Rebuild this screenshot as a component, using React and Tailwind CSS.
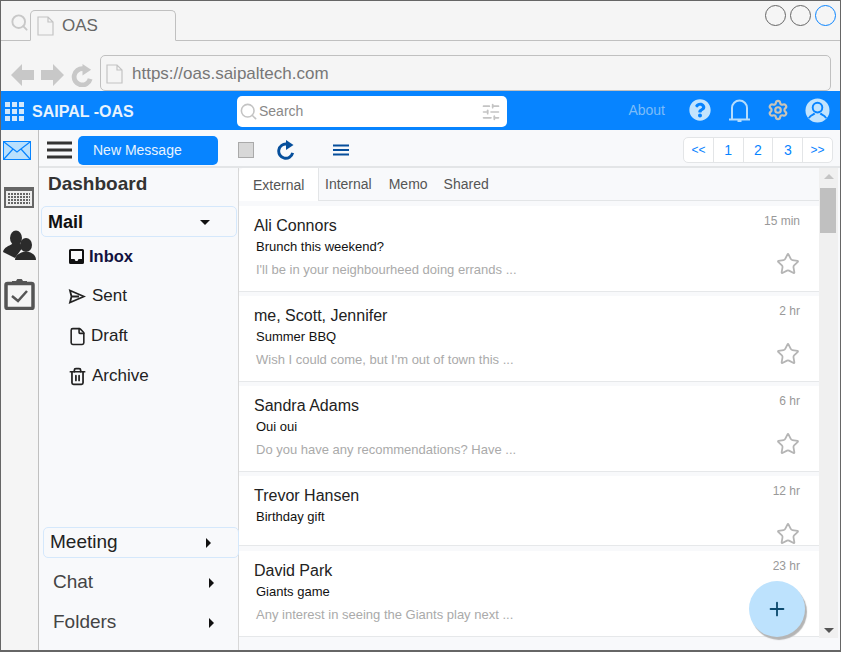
import { Search, SlidersHorizontal, Settings, Star, Plus, File, Trash2 } from "lucide-react";
import { FaQuestionCircle } from "react-icons/fa";

const messages = [
  { name: "Ali Connors", subject: "Brunch this weekend?", preview: "I'll be in your neighbourheed doing errands ...", time: "15 min", height: "h-[86px]" },
  { name: "me, Scott, Jennifer", subject: "Summer BBQ", preview: "Wish I could come, but I'm out of town this ...", time: "2 hr", height: "h-[86px]" },
  { name: "Sandra Adams", subject: "Oui oui", preview: "Do you have any recommendations? Have ...", time: "6 hr", height: "h-[86px]" },
  { name: "Trevor Hansen", subject: "Birthday gift", preview: "", time: "12 hr", height: "h-[70px]" },
  { name: "David Park", subject: "Giants game", preview: "Any interest in seeing the Giants play next ...", time: "23 hr", height: "h-[86px] mt-[1px]", noStar: true },
];

const mailFolders = [
  { label: "Sent", icon: <SentIcon />, gap: "gap-[6px]" },
  { label: "Draft", icon: <File className="w-[19px] h-[19px]" strokeWidth={2} />, gap: "gap-[4px]" },
  { label: "Archive", icon: <Trash2 className="w-[19px] h-[19px]" strokeWidth={2.2} />, gap: "gap-[5px]" },
];

function SentIcon() {
  return (
    <svg width="18" height="17" viewBox="0 0 18 17" fill="none" stroke="currentColor" strokeWidth="1.8">
      <path d="M2 2.500 16 8.500 2 14.500 3.500 8.500ZM3.500 8.500H11" />
    </svg>
  );
}

function InboxIcon() {
  return (
    <svg width="17" height="17" viewBox="0 0 17 17">
      <path fillRule="evenodd" fill="#111" d="M2.500 1h12A1.500 1.500 0 0 1 16 2.500v12a1.500 1.500 0 0 1-1.500 1.500h-12A1.500 1.500 0 0 1 1 14.500v-12A1.500 1.500 0 0 1 2.500 1ZM3 3v8h3.500l1 2h2l1-2H14V3Z" />
    </svg>
  );
}

function RefreshIcon({ size, color, strokeWidth }) {
  return (
    <svg width={size} height={size} viewBox="0 0 24 24" fill="none">
      <path d="M20 15.500A8.500 8.500 0 1 1 13 5" stroke={color} strokeWidth={strokeWidth} />
      <path d="M12 0 21 6 12 12Z" fill={color} />
    </svg>
  );
}

function BrowserArrow({ flip }) {
  return (
    <svg width="23" height="24" viewBox="0 0 23 24" className={flip ? "-scale-x-100" : ""}>
      <path fill="#c8c8c8" d="M0 12 11 1v6h12v10H11v6Z" />
    </svg>
  );
}

function Caret({ down }) {
  return down ? (
    <span className="w-0 h-0 border-x-[5px] border-x-transparent border-t-[5px] border-t-[#111]" />
  ) : (
    <span className="w-0 h-0 border-y-[5px] border-y-transparent border-l-[5px] border-l-[#111]" />
  );
}

function PageIcon() {
  return (
    <svg width="17" height="20" viewBox="0 0 17 20" fill="#f5f5f5" stroke="#c4c4c4" strokeWidth="1.2">
      <path d="M1 1h10l5 5v13H1ZM11 1v5h5" />
    </svg>
  );
}

function GridLogo() {
  return (
    <div className="grid grid-cols-3 gap-[2px] w-[19px]">
      {Array.from({ length: 9 }).map((_, i) => (
        <span key={i} className="w-[5px] h-[5px] bg-[#d3e8fb]" />
      ))}
    </div>
  );
}

function MailCard({ msg }) {
  return (
    <div className={`${msg.height} bg-white border-b border-[#e6e8ea] relative shrink-0 pl-[15px] pr-[19px]`}>
      <div className="flex justify-between">
        <span className="mt-[11px] text-[16px] leading-[18px] text-[#222]">{msg.name}</span>
        <span className="mt-[8px] text-[12px] leading-[14px] text-[#999]">{msg.time}</span>
      </div>
      <p className="ml-[2px] mt-[4px] text-[13px] leading-[16px] text-[#111]">{msg.subject}</p>
      {msg.preview && <p className="ml-[2px] mt-[7px] text-[13px] leading-[16px] text-[#aaa]">{msg.preview}</p>}
      {!msg.noStar && (
        <Star className="absolute right-[19px] top-[46px] w-[24px] h-[24px] text-[#b5b5b5]" strokeWidth={1.8} />
      )}
    </div>
  );
}

export default function App() {
  return (
    <div className="w-[841px] h-[652px] border border-b-2 border-[#666] bg-[#f5f5f5] flex flex-col overflow-hidden font-['Liberation_Sans',Arial,sans-serif]">
      {/* Browser chrome */}
      <div className="h-[40px] border-b border-[#c0c0c0] flex items-end pl-[9px] relative shrink-0">
        <Search className="absolute left-[9px] top-[12px] w-[19px] h-[19px] text-[#c8c8c8]" strokeWidth={2.4} />
        <div className="ml-[20px] w-[146px] h-[31px] -mb-px bg-[#f5f5f5] border border-[#c0c0c0] border-b-[#f5f5f5] rounded-t-[5px] flex items-center pl-[6px] gap-[8px]">
          <PageIcon />
          <span className="text-[17px] text-[#666]">OAS</span>
        </div>
        <div className="ml-auto self-start mt-[4px] mr-[4px] flex gap-[4px]">
          <span className="w-[21px] h-[21px] rounded-full border border-[#666]" />
          <span className="w-[21px] h-[21px] rounded-full border border-[#666]" />
          <span className="w-[21px] h-[21px] rounded-full border border-[#0a84ff]" />
        </div>
      </div>
      <div className="h-[50px] flex items-end pl-[10px] pr-[9px] shrink-0">
        <div className="flex items-center gap-[7px] mb-[4px] mr-[6px]">
          <BrowserArrow />
          <BrowserArrow flip />
          <RefreshIcon size={23} color="#c8c8c8" strokeWidth={5} />
        </div>
        <div className="flex-1 h-[36px] pt-[1px] bg-[#f5f5f5] border border-[#c0c0c0] rounded-[5px] flex items-center pl-[5px] gap-[9px]">
          <PageIcon />
          <span className="text-[17px] text-[#777]">https://oas.saipaltech.com</span>
        </div>
      </div>

      {/* App header */}
      <header className="h-[39px] bg-[#0784ff] flex items-center pl-[4px] pr-[10px] pt-[2px] shrink-0">
        <GridLogo />
        <span className="ml-[8px] w-[205px] text-[16px] font-bold text-[#e8f3fd]">SAIPAL -OAS</span>
        <div className="w-[270px] h-[31px] bg-white rounded-[5px] flex items-center pl-[2px] pr-[6px] text-[#888]">
          <Search className="w-[19px] h-[19px] text-[#c4c4c4]" strokeWidth={2} />
          <span className="ml-[1px] text-[14px] flex-1">Search</span>
          <SlidersHorizontal className="w-[20px] h-[20px] text-[#c4c4c4]" strokeWidth={2} />
        </div>
        <div className="ml-auto -mt-[3px] flex items-center">
          <span className="text-[14px] text-[#7cbcf8]">About</span>
          <FaQuestionCircle className="ml-[24px] w-[22px] h-[22px] text-[#c3e4fd]" />
          <svg width="25" height="25" viewBox="0 0 25 25" className="ml-[16px]" fill="none" stroke="#b5dcfc" strokeWidth="2">
            <path d="M5 21V10a7.500 7.500 0 0 1 15 0v11M2 21.500h21" />
            <path d="M10.500 23h4" />
          </svg>
          <Settings className="ml-[15px] w-[22px] h-[22px] text-[#c9c4b8]" strokeWidth={2.4} />
          <svg width="25" height="25" viewBox="0 0 26 26" className="ml-[16px]">
            <circle cx="13" cy="13" r="12.500" fill="#c3e4fd" />
            <circle cx="13" cy="10" r="5" fill="none" stroke="#0784ff" strokeWidth="2" />
            <path d="M4 21c2-4 5-3.500 6-5M22 21c-2-4-5-3.500-6-5" fill="none" stroke="#0784ff" strokeWidth="2" />
          </svg>
        </div>
      </header>

      <div className="flex-1 flex min-h-0">
        {/* Icon rail */}
        <aside className="w-[38px] border-r border-[#c0c0c0] flex flex-col pl-[2px] pt-[11px] shrink-0">
          <svg width="28" height="19" viewBox="0 0 28 19">
            <rect x="0.500" y="0.500" width="27" height="18" fill="#b9e0fd" stroke="#0784ff" />
            <path d="M1 1 14 11 27 1M1 18 10 8M27 18 18 8" fill="none" stroke="#0784ff" strokeWidth="1.200" />
          </svg>
          <svg width="30" height="21" viewBox="0 0 30 21" className="mt-[27px] ml-[1px]">
            <rect x="1" y="1" width="28" height="19" fill="#eee" stroke="#666" strokeWidth="2" />
            <rect x="1" y="1" width="28" height="3" fill="#666" />
            <path d="M4 7h22M4 10h22M4 13h22M4 16h22" stroke="#666" strokeWidth="2" strokeDasharray="2 1" />
          </svg>
          <svg width="33" height="31" viewBox="0 0 33 31" className="mt-[22px]">
            <g fill="#2b2b2b">
              <ellipse cx="13" cy="8" rx="6" ry="7.500" />
              <path d="M0 22c1-5 6-6 9-8h8l3 3-8 11Z" />
              <ellipse cx="23" cy="15" rx="6" ry="7" />
              <path d="M12 30c0-5 5-7 8-8h6c3 1 7 3 7 8Z" />
            </g>
          </svg>
          <svg width="31" height="31" viewBox="0 0 31 31" className="mt-[18px] ml-[1px]">
            <rect x="2" y="4.500" width="27" height="25" rx="1.500" fill="#f5f5f5" stroke="#555" strokeWidth="3.500" />
            <path d="M9 5h13V3h-4a2.500 2.500 0 0 0-5 0H9Z" fill="#555" stroke="#555" strokeWidth="2" />
            <path d="M8 17l6 5 9-10" fill="none" stroke="#555" strokeWidth="2.500" />
          </svg>
        </aside>

        <div className="flex-1 flex flex-col min-w-0 bg-[#f8f9fb]">
          {/* Toolbar */}
          <div className="h-[38px] border-b-2 border-[#e3e5e7] flex items-center pl-[8px] pr-[7px] pt-[4px] shrink-0">
            <svg width="25" height="18" viewBox="0 0 25 18">
              <path d="M0 2h25M0 9h25M0 16h25" stroke="#333" strokeWidth="3" />
            </svg>
            <button className="ml-[6px] w-[140px] h-[29px] bg-[#0784ff] rounded-[5px] text-[14px] text-[#e8f3fd] text-left pl-[15px]">New Message</button>
            <span className="ml-[20px] w-[16px] h-[16px] bg-[#d8d8d8] border border-[#aaa]" />
            <span className="ml-[22px]">
              <RefreshIcon size={20} color="#064f9c" strokeWidth={3.5} />
            </span>
            <svg width="16" height="12" viewBox="0 0 16 12" className="ml-[37px]">
              <path d="M0 1.500h16M0 6h16M0 10.500h16" stroke="#064f9c" strokeWidth="2" />
            </svg>
            <div className="ml-auto w-[150px] h-[26px] flex bg-white border border-[#e3e5e7] rounded-[5px] text-[#0784ff] divide-x divide-[#e3e5e7]">
              {["<<", "1", "2", "3", ">>"].map((p) => (
                <span key={p} className={`flex-1 flex items-center justify-center ${p.length > 1 ? "text-[12px]" : "text-[14px]"}`}>{p}</span>
              ))}
            </div>
          </div>

          <div className="flex-1 flex min-h-0">
            {/* Sidebar */}
            <nav className="w-[200px] shrink-0 flex flex-col justify-between border-r border-[#d8d8d8] relative z-10">
              <div>
                <div className="h-[31px] pt-[1px] pl-[9px] flex items-center text-[19px] font-bold text-[#333]">Dashboard</div>
                <div className="ml-[2px] mt-[7px] w-[196px] h-[31px] pt-[1px] pl-[6px] pr-[26px] flex items-center justify-between bg-[#f8f9fb] border border-[#d5e8fb] rounded-[5px] text-[18px] font-bold text-[#111]">
                  Mail
                  <Caret down />
                </div>
                <div className="pl-[29px] mt-[8px] h-[22px] flex items-center gap-[4px] text-[16.500px] font-bold text-[#12123f]">
                  <InboxIcon />
                  Inbox
                </div>
                {mailFolders.map((f) => (
                  <div key={f.label} className={`pl-[29px] mt-[18px] h-[22px] flex items-center ${f.gap} text-[17px] text-[#222]`}>
                    {f.icon}
                    {f.label}
                  </div>
                ))}
              </div>
              <div className="pb-[12px]">
                <div className="ml-[4px] w-[196px] h-[31px] pl-[6px] pr-[27px] flex items-center justify-between bg-[#f8f9fb] border border-[#d5e8fb] rounded-[5px] text-[19px] text-[#222]">
                  Meeting
                  <Caret />
                </div>
                <div className="mt-[9px] h-[31px] pl-[14px] pr-[24px] flex items-center justify-between text-[19px] text-[#444]">
                  Chat
                  <Caret />
                </div>
                <div className="mt-[9px] h-[31px] pl-[14px] pr-[24px] flex items-center justify-between text-[19px] text-[#444]">
                  Folders
                  <Caret />
                </div>
              </div>
            </nav>

            {/* Message list */}
            <main className="flex-1 flex flex-col min-w-0 relative">
              <div className="flex flex-1 min-h-0 pr-[2px]">
                <div className="flex-1 min-w-0 flex flex-col">
                  <div className="h-[33px] shrink-0 flex items-end border-b border-[#e3e5e7] text-[14px] text-[#555]">
                    <span className="w-[80px] h-[33px] pt-[2px] -mb-px bg-white border-r border-[#e3e5e7] rounded-tl-[5px] flex items-center pl-[14px]">External</span>
                    <span className="ml-[6px] h-[33px] pt-[2px] flex items-center">Internal</span>
                    <span className="ml-[17px] h-[33px] pt-[2px] flex items-center">Memo</span>
                    <span className="ml-[16px] h-[33px] pt-[2px] flex items-center">Shared</span>
                  </div>
                  <div className="mt-[5px] flex flex-col gap-[4px] overflow-hidden">
                    {messages.map((m) => (
                      <MailCard key={m.name} msg={m} />
                    ))}
                  </div>
                </div>
                {/* Scrollbar */}
                <div className="w-[19px] shrink-0 bg-[#f0f0f0] flex flex-col items-center justify-between pt-[6px] pb-[5px] relative">
                  <span className="w-0 h-0 border-x-[5px] border-x-transparent border-b-[5px] border-b-[#c4c4c4]" />
                  <span className="absolute top-[20px] left-[1px] w-[16px] h-[45px] bg-[#c0c0c0]" />
                  <span className="w-0 h-0 border-x-[5px] border-x-transparent border-t-[5px] border-t-[#555]" />
                </div>
              </div>
              <div className="h-[12px] shrink-0" />
              <button className="absolute right-[35px] bottom-[13px] w-[56px] h-[56px] rounded-full bg-[#bde2fd] shadow-[2px_3px_1px_#b5b5b5] flex items-center justify-center text-[#0c4a6e]">
                <Plus className="w-[22px] h-[22px]" strokeWidth={2} />
              </button>
            </main>
          </div>
        </div>
      </div>
    </div>
  );
}
